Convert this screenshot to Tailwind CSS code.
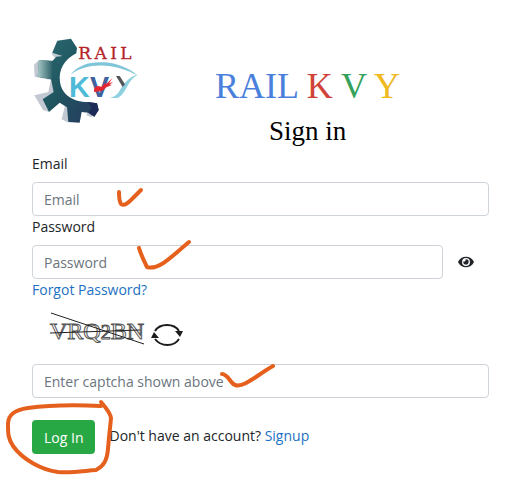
<!DOCTYPE html>
<html lang="en">
<head>
  <meta charset="UTF-8">
  <meta name="viewport" content="width=device-width, initial-scale=1.0">
  <title>Rail KVY - Sign in</title>
  <script src="https://cdn.jsdelivr.net/npm/@tailwindcss/browser@4"></script>
</head>
<body class="bg-white text-[#212529] text-[14px] leading-[21px] font-['Open_Sans',sans-serif]">
  <main class="pt-[30px] pl-8 pr-[26px] pb-8">
    <header class="flex items-start">
      <svg class="w-[118px] h-[105px] shrink-0" viewBox="21 0 354 315" role="img" aria-label="Rail KVY logo">
        <defs>
          <linearGradient id="gear" x1="0" y1="0" x2="1" y2="1">
            <stop offset="0" stop-color="#2c6a70"/>
            <stop offset=".5" stop-color="#1f555f"/>
            <stop offset="1" stop-color="#28385f"/>
          </linearGradient>
          <linearGradient id="tooth" x1="0" y1="0" x2="1" y2="0">
            <stop offset="0" stop-color="#a9c9c7"/>
            <stop offset="1" stop-color="#235a63"/>
          </linearGradient>
        </defs>
        <!-- bevel behind the gear -->
        <path fill="#c3c9d2" d="M97 32L80 72 92 86 110 76zM42 90L27 104 29 140 78 150 78 142zM78 148L70 186 28 196 54 240 72 246 58 208 92 184zM120 226L110 268 130 278 136 232zM196 228L184 256 200 262 212 240z"/>
        <!-- gear body -->
        <path fill="url(#gear)" d="M97 32L138 26 156 54 154 70C118 88 100 120 105 155 110 195 145 215 188 216L216 220 221 240 208 260 190 248 170 246 164 278 130 276 126 232 104 218 72 246 53 208 86 186 78 148 38 140 42 90 82 93 94 80 112 78 82 68z"/>
        <path fill="url(#tooth)" d="M42 90l43 3-5 55-42-8z"/>
        <path fill="#1d2b58" d="M188 216l28 4 5 20-13 20-18-12 10-16z"/>
        <text x="160" y="88" font-family="DejaVu Serif, serif" font-size="51" fill="#b4242b" stroke="#b4242b" stroke-width="1">R&#8201;A&#8201;I&#8201;L</text>
        <!-- arc over the letters, running down into the Y -->
        <path fill="#7fc5d8" d="M136 134C160 104 196 94 238 97c38 3 70 16 100 39-34-17-64-27-98-29-36-3-74 4-104 27z"/>
        <path fill="#8dd0df" d="M338 134c-26 4-42 28-56 51-5 8-14 16-28 19h24c12-5 22-22 29-35 8-16 17-27 31-35z"/>
        <text x="132" y="202" font-family="Liberation Sans, sans-serif" font-weight="bold" font-size="86" fill="#4ebbd8">K</text>
        <text x="195" y="202" font-family="Liberation Sans, sans-serif" font-weight="bold" font-size="86" fill="#3f629e">V</text>
        <path fill="#e3262f" d="M208 186c-3-8 2-16 10-18l12 2 14-14-3 8 22-20-11 16 13-5-12 9 9 0-18 8c-6 8-14 12-20 12z"/>
        <path fill="#52565b" d="M273 138h11l16 25-7 8z"/>
      </svg>
      <div class="ml-[65px] mt-[34px] text-center font-['Liberation_Serif',serif]">
        <h1 class="text-[36px] leading-[45px] whitespace-nowrap text-[#4a80dc]">RAIL <span class="text-[#cf4339]">K</span> <span class="text-[#36a15a]">V</span> <span class="text-[#efb91f]">Y</span></h1>
        <h2 class="text-[27px] leading-[44px] text-black">Sign in</h2>
      </div>
    </header>

    <form>
      <label for="email" class="block mb-2">Email</label>
      <div class="relative">
        <input id="email" type="email" placeholder="Email" class="block w-full h-[34px] px-[11px] rounded-[4px] border border-[#ced4da] placeholder:text-[#6c757d]">
        <svg class="absolute left-[80px] top-0 w-8 h-8 pointer-events-none" viewBox="0 0 32 32" fill="none" stroke="#e5601c" stroke-width="4" stroke-linecap="round" stroke-linejoin="round">
          <path d="M7 10c0 5 0 9 2 12 4 3 9-3 13-7l7-7"/>
        </svg>
      </div>

      <label for="password" class="block mb-2">Password</label>
      <div class="relative flex items-center">
        <input id="password" type="password" placeholder="Password" class="block min-w-0 flex-1 h-[34px] px-[11px] rounded-[4px] border border-[#ced4da] placeholder:text-[#6c757d]">
        <button type="button" aria-label="Show password" class="ml-[15px] mr-[15px]">
          <svg class="w-4 h-[14px]" viewBox="0 0 576 512" fill="#212529">
            <path fill-rule="evenodd" d="M572 241C518 136 411 64 288 64S58 136 4 241a32 32 0 0 0 0 30c54 105 161 177 284 177s230-72 284-177a32 32 0 0 0 0-30zM288 400a144 144 0 1 1 0-288 144 144 0 0 1 0 288zm0-240a95 95 0 0 0-25 4 48 48 0 0 1-67 67 96 96 0 1 0 92-71z"/>
          </svg>
        </button>
        <svg class="absolute left-[100px] -top-[8px] w-[64px] h-10 pointer-events-none" viewBox="0 0 64 40" fill="none" stroke="#e5601c" stroke-width="4" stroke-linecap="round" stroke-linejoin="round">
          <path d="M7 11c2 7 5 13 8 19 12 4 26-12 42-25"/>
        </svg>
      </div>
      <a href="#" class="block w-fit text-[#1d71c4]">Forgot Password?</a>

      <div class="mt-2 flex items-start">
        <svg class="ml-4 w-[100px] h-10 shrink-0" viewBox="0 0 100 40" role="img" aria-label="Captcha image">
          <text x="2" y="31" font-family="Liberation Serif, serif" font-size="24" fill="#fff" stroke="#555" stroke-width="1">VRQ<tspan font-size="20">2</tspan>BN</text>
          <path fill="none" stroke="#222" d="M3 5l93 31M2 25l90-3"/>
        </svg>
        <button type="button" aria-label="Refresh captcha" class="mt-[15px] ml-[2px]">
          <svg class="w-[34px] h-6" viewBox="0 0 34 24" fill="none" stroke="#1c1c1c" stroke-width="2">
            <path d="M5 8c5-8 19-8 24 0M29 16c-5 8-18 8-24 0"/>
            <path fill="#1c1c1c" stroke="none" d="M25 8l8 0-3 6zM1 15l3-6 5 6z"/>
          </svg>
        </button>
      </div>

      <div class="relative mt-4">
        <input type="text" aria-label="Captcha" placeholder="Enter captcha shown above" class="block w-full h-[34px] px-[11px] rounded-[4px] border border-[#ced4da] placeholder:text-[#6c757d]">
        <svg class="absolute left-[184px] -top-[4px] w-[60px] h-8 pointer-events-none" viewBox="0 0 60 32" fill="none" stroke="#e5601c" stroke-width="4" stroke-linecap="round" stroke-linejoin="round">
          <path d="M6 14c6 0 8 9 13 11 9 3 22-10 38-19"/>
        </svg>
      </div>

      <div class="relative mt-[22px] flex items-center">
        <button type="button" class="h-[34px] px-3 rounded-[4px] bg-[#28a745] text-white">Log In</button>
        <p class="ml-[14px] pb-1">Don't have an account? <a href="#" class="text-[#1d71c4]">Signup</a></p>
        <svg class="absolute -left-8 -top-[22px] w-[120px] h-20 pointer-events-none" viewBox="0 0 120 80" fill="none" stroke="#e5601c" stroke-width="4" stroke-linecap="round" stroke-linejoin="round">
          <path d="M101 8C78 7 50 7 28 10 14 12 8 17 8 26c0 10 0 14 5 22 10 14 29 24 45 26 14 1 25-1 38-2 8-4 11-10 12-21 1-13 2-20 3-31-1-6-5-10-10-16"/>
        </svg>
      </div>
    </form>
  </main>
</body>
</html>
